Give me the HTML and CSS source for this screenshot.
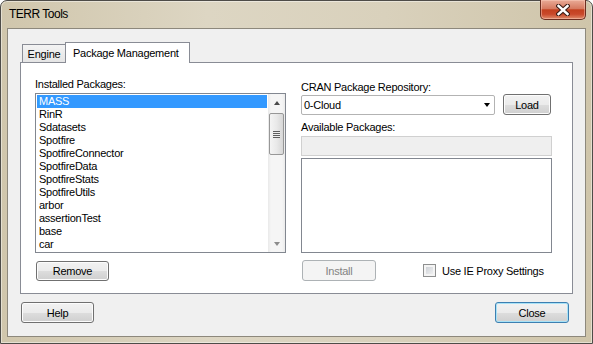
FILE: index.html
```html
<!DOCTYPE html>
<html lang="en">
<head>
    <meta charset="UTF-8">
    <title>TERR Tools</title>
    <link rel="stylesheet" href="styles.css">
</head>
<body>
    <div class="window">
        <div class="titlebar">
            <span class="title">TERR Tools</span>
            <button class="close-x" aria-label="Close">
                <svg width="14" height="12" viewBox="0 0 14 12">
                    <path d="M2.5 2 L11.5 10 M11.5 2 L2.5 10" stroke="#3b1d16" stroke-width="4.6" stroke-linecap="square" fill="none"/>
                    <path d="M2.5 2 L11.5 10 M11.5 2 L2.5 10" stroke="#ffffff" stroke-width="2.4" stroke-linecap="square" fill="none"/>
                </svg>
            </button>
        </div>

        <div class="client">
            <div class="tabs">
                <div class="tab">Engine</div>
                <div class="tab active">Package Management</div>
            </div>

            <div class="panel">
                <div class="col">
                    <div class="label">Installed Packages:</div>
                    <div class="listbox installed">
                        <ul class="items">
                            <li class="selected">MASS</li>
                            <li>RinR</li>
                            <li>Sdatasets</li>
                            <li>Spotfire</li>
                            <li>SpotfireConnector</li>
                            <li>SpotfireData</li>
                            <li>SpotfireStats</li>
                            <li>SpotfireUtils</li>
                            <li>arbor</li>
                            <li>assertionTest</li>
                            <li>base</li>
                            <li>car</li>
                        </ul>
                        <div class="vscroll">
                            <div class="sb-arrow up"></div>
                            <div class="sb-thumb"><span class="grip"></span></div>
                            <div class="sb-arrow down"></div>
                        </div>
                    </div>
                    <button class="btn remove">Remove</button>
                </div>

                <div class="col right">
                    <div class="label">CRAN Package Repository:</div>
                    <div class="repo-row">
                        <div class="combo">
                            <span>0-Cloud</span>
                            <span class="combo-arrow"></span>
                        </div>
                        <button class="btn load">Load</button>
                    </div>
                    <div class="label avail">Available Packages:</div>
                    <div class="search"></div>
                    <div class="listbox available"></div>
                    <div class="install-row">
                        <button class="btn install" disabled>Install</button>
                        <label class="check">
                            <span class="box"></span>
                            <span>Use IE Proxy Settings</span>
                        </label>
                    </div>
                </div>
            </div>

            <div class="footer">
                <button class="btn help">Help</button>
                <button class="btn close default">Close</button>
            </div>
        </div>
    </div>
</body>
</html>
```

FILE: styles.css
```css
body {
    margin: 0;
    font-family: "Liberation Sans", Arial, sans-serif;
    font-size: 11px;
    letter-spacing: -0.25px;
    color: #000;
}

.window {
    width: 593px;
    height: 344px;
    box-sizing: border-box;
    border: 1px solid #4e4c48;
    border-radius: 7px 7px 0 0;
    padding: 0 6px 6px;
    display: flex;
    flex-direction: column;
    background: linear-gradient(to right, #d0c6ac 0%, #ddd6c3 35%, #d9d1bc 65%, #cfc5aa 100%);
    box-shadow: inset 0 0 0 1px rgba(255, 255, 255, 0.45);
}

.titlebar {
    height: 27px;
    display: flex;
    align-items: flex-start;
    justify-content: space-between;
}

.title {
    padding: 6px 0 0 2px;
    font-size: 12px;
    line-height: 14px;
    letter-spacing: -0.5px;
}

.close-x {
    width: 46px;
    height: 20px;
    margin-top: -1px;
    padding: 0;
    border: 1px solid #6b2d20;
    border-top: none;
    border-radius: 0 0 5px 5px;
    background: linear-gradient(#e9ab97 0%, #d67a60 45%, #c3401f 52%, #c9492b 75%, #e08c6c 100%);
    box-shadow: inset 0 0 0 1px rgba(255, 210, 195, 0.45);
    display: flex;
    align-items: center;
    justify-content: center;
}

.client {
    flex: 1;
    border: 1px solid #8d887c;
    background: #f0f0f0;
    padding: 13px 12px 0;
    display: flex;
    flex-direction: column;
}

/* tabs */
.tabs {
    display: flex;
    align-items: flex-end;
    padding-left: 2px;
    height: 21px;
    margin-bottom: -1px;
}

.tab {
    height: 19px;
    box-sizing: border-box;
    border: 1px solid #898c95;
    border-bottom: none;
    padding: 0 6px;
    line-height: 18px;
    background: linear-gradient(#f3f3f3, #e4e4e4);
}

.tab:first-child {
    width: 44px;
    text-align: center;
    padding: 0;
}

.tab.active {
    height: 21px;
    width: 125px;
    margin-left: -1px;
    padding: 0 0 0 7px;
    line-height: 20px;
    background: #fff;
    position: relative;
    z-index: 1;
}

.panel {
    height: 232px;
    box-sizing: border-box;
    border: 1px solid #898c95;
    background: #fff;
    padding: 15px 20px 0 14px;
    display: flex;
    gap: 15px;
}

.col {
    width: 251px;
    display: flex;
    flex-direction: column;
    align-items: flex-start;
}

.label {
    line-height: 13px;
    margin-bottom: 2px;
}

.right .label {
    margin-top: 3px;
    margin-bottom: 1px;
}

.right .label.avail {
    margin-top: 6px;
    margin-bottom: 2px;
}

/* list boxes */
.listbox {
    width: 251px;
    box-sizing: border-box;
    border: 1px solid #828790;
    background: #fff;
}

.installed {
    height: 160px;
    display: flex;
}

.items {
    list-style: none;
    margin: 0;
    padding: 1px;
    flex: 1;
}

.items li {
    height: 13px;
    line-height: 13px;
    padding-left: 2px;
    white-space: nowrap;
}

.items li.selected {
    background: #3399ff;
    color: #fff;
}

.vscroll {
    width: 17px;
    display: flex;
    flex-direction: column;
    align-items: center;
    background: linear-gradient(to right, #e9e9e9 0, #f5f5f5 3px, #f5f5f5 14px, #ebebeb 17px);
}

.sb-arrow {
    height: 17px;
    width: 17px;
    display: flex;
    align-items: center;
    justify-content: center;
}

.sb-arrow::before {
    content: "";
    border-left: 3.5px solid transparent;
    border-right: 3.5px solid transparent;
}

.sb-arrow.up::before {
    border-bottom: 4px solid #4a4a4a;
}

.sb-arrow.down {
    margin-top: auto;
}

.sb-arrow.down::before {
    border-top: 4px solid #8c8c8c;
}

.sb-thumb {
    width: 15px;
    height: 42px;
    box-sizing: border-box;
    margin-top: 2px;
    border: 1px solid #979797;
    border-radius: 2px;
    background: linear-gradient(to right, #f4f4f4, #e9e9e9 50%, #d7d7d7);
    display: flex;
    align-items: center;
    justify-content: center;
}

.grip {
    width: 7px;
    height: 7px;
    background: repeating-linear-gradient(#5e5e5e 0, #5e5e5e 1px, #eeeeee 1px, #eeeeee 2px);
}

/* buttons */
.btn {
    font-family: inherit;
    font-size: 11px;
    letter-spacing: -0.25px;
    color: #000;
    padding: 0;
    box-sizing: border-box;
    border: 1px solid #707070;
    border-radius: 3px;
    background: linear-gradient(#f2f2f2 0%, #ebebeb 50%, #dddddd 51%, #cfcfcf 100%);
    box-shadow: inset 0 0 0 1px #fcfcfc;
}

.btn:disabled {
    border-color: #adb2b5;
    background: #f4f4f4;
    color: #838383;
    box-shadow: none;
}

.btn.default {
    border-color: #3c7fb1;
    box-shadow: inset 0 0 0 1px #a8e2f7;
}

.remove {
    width: 73px;
    height: 20px;
    margin: 8px 0 0 1px;
}

.repo-row {
    display: flex;
    gap: 8px;
}

.combo {
    width: 194px;
    height: 20px;
    box-sizing: border-box;
    border: 1px solid #b3b3b3;
    border-radius: 2px;
    background: #fff;
    display: flex;
    align-items: center;
    justify-content: space-between;
    padding: 0 4px 0 2px;
}

.combo-arrow {
    border-left: 3.5px solid transparent;
    border-right: 3.5px solid transparent;
    border-top: 4px solid #000;
}

.load {
    width: 48px;
    height: 21px;
    margin-top: -1px;
}

.search {
    width: 251px;
    height: 20px;
    box-sizing: border-box;
    border: 1px solid #d0d0d0;
    background: #efefef;
    margin-bottom: 2px;
}

.available {
    height: 95px;
}

.install-row {
    display: flex;
    align-items: center;
    margin-top: 7px;
}

.install {
    width: 74px;
    height: 21px;
    margin-left: 1px;
}

.check {
    display: flex;
    align-items: center;
    gap: 6px;
    margin-left: 47px;
}

.box {
    width: 13px;
    height: 13px;
    box-sizing: border-box;
    border: 1px solid #8e8f8f;
    background: linear-gradient(135deg, #c6cad0, #f7f7f7);
    box-shadow: inset 0 0 0 2px #f4f4f4;
}

.footer {
    display: flex;
    justify-content: space-between;
    margin-top: 8px;
    padding: 0 4px 0 1px;
}

.help {
    width: 73px;
    height: 21px;
}

.close {
    width: 74px;
    height: 21px;
}
```
